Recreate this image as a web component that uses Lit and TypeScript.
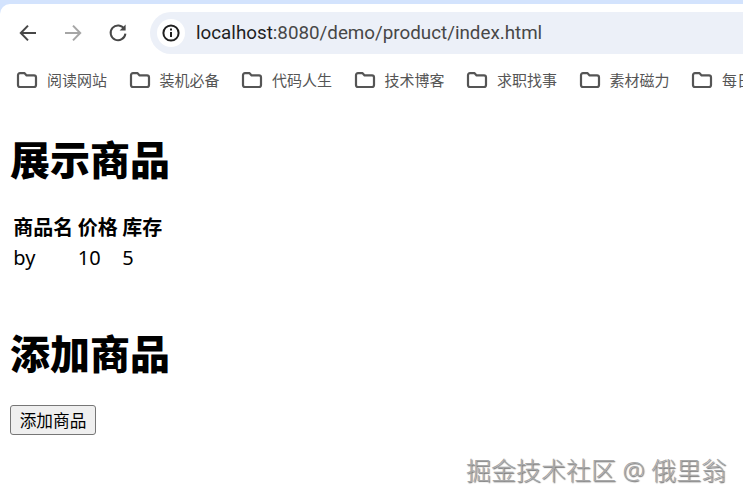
import { LitElement, html, css, svg } from "lit";
import { customElement } from "lit/decorators.js";

const folder = svg`<svg class="folder" viewBox="0 0 22 18" width="22" height="18" fill="none"><path d="M2 4.2C2 3 2.8 2.2 4 2.2h4.6l2 2.2H18c1.2 0 2 .8 2 2v7.6c0 1.2-.8 2-2 2H4c-1.2 0-2-.8-2-2z" stroke="#555" stroke-width="2.2" stroke-linejoin="round"/></svg>`;

const marks = ["阅读网站", "装机必备", "代码人生", "技术博客", "求职找事", "素材磁力", "每日"];

@customElement("app-root")
export class AppRoot extends LitElement {
  static styles = css`
    :host { display: block; position: relative; width: 743px; height: 502px; overflow: hidden; background: #fff; font-family: "Noto Sans", "Noto Sans CJK SC", sans-serif; color: #000; }
    .frame { background: #d3e3fd; padding-top: 4px; }
    .toolbar { height: 58px; display: flex; align-items: center; padding-left: 17px; box-sizing: border-box; background: #fff; border-top-left-radius: 10px; }
    .nav { width: 22px; height: 22px; display: block; }
    .nav + .nav { margin-left: 23px; }
    .omni { margin-left: 21px; flex: 1; height: 42px; background: #ecf0f8; border-radius: 21px 0 0 21px; display: flex; align-items: center; padding-left: 7px; }
    .info { width: 28px; height: 28px; border-radius: 50%; background: #fff; display: flex; align-items: center; justify-content: center; }
    .url { margin-left: 11px; font: 18.8px "Roboto", "Noto Sans", sans-serif; color: #1f1f1f; white-space: nowrap; }
    .url span { color: #474747; }
    .marks { height: 35px; display: flex; align-items: center; padding-left: 16px; gap: 21.5px; white-space: nowrap; }
    .mark { display: flex; align-items: center; gap: 9px; font-size: 15px; color: #555; }
    .folder { display: block; flex: none; }
    main { padding: 0 10px; }
    h1 { margin: 0; font-size: 40px; line-height: 58px; font-weight: 900; }
    .h-a { margin-top: 34px; }
    .h-b { margin-top: 52px; }
    table { border-collapse: separate; border-spacing: 2.5px; margin-top: 23px; font-size: 20px; line-height: 25px; }
    th, td { padding: 1.25px; text-align: left; font-weight: 400; }
    th { font-weight: 700; }
    button { margin-top: 22px; display: block; height: 30px; width: 86px; padding: 0; font: 16.67px "Noto Sans CJK SC", sans-serif; color: #000; background: #efefef; border: 1.25px solid #767676; border-radius: 3px; }
    .water { position: absolute; left: 466px; top: 454px; font-size: 25px; line-height: 32px; font-weight: 300; white-space: nowrap; color: #a8a8a8; text-shadow: 1px 1px 1px #777; }
  `;

  render() {
    return html`
      <div class="frame">
        <div class="toolbar">
          <svg class="nav" viewBox="0 0 22 22" fill="none" stroke="#474747" stroke-width="2"><path d="M19 11H4M11 3.6 3.8 11l7.2 7.4"/></svg>
          <svg class="nav" viewBox="0 0 22 22" fill="none" stroke="#a6a6a6" stroke-width="2"><path d="M3 11h15M11 3.6 18.2 11 11 18.4"/></svg>
          <svg class="nav" viewBox="0 0 22 22" fill="none" stroke="#474747" stroke-width="2"><path d="M17.4 7A7.4 7.4 0 1 0 18.4 11.6"/><path d="M18.6 2.6v6h-6" fill="#474747" stroke="none"/></svg>
          <div class="omni">
            <div class="info">
              <svg viewBox="0 0 20 20" width="20" height="20" fill="none"><circle cx="10" cy="10" r="7.6" stroke="#1f1f1f" stroke-width="2"/><path d="M10 9v5M10 5.6v1.8" stroke="#1f1f1f" stroke-width="2"/></svg>
            </div>
            <div class="url">localhost<span>:8080/demo/product/index.html</span></div>
          </div>
        </div>
      </div>
      <div class="marks">
        ${marks.map((m) => html`<div class="mark">${folder}<span>${m}</span></div>`)}
      </div>
      <main>
        <h1 class="h-a">展示商品</h1>
        <table>
          <tr><th>商品名</th><th>价格</th><th>库存</th></tr>
          <tr><td>by</td><td>10</td><td>5</td></tr>
        </table>
        <h1 class="h-b">添加商品</h1>
        <button>添加商品</button>
      </main>
      <div class="water">掘金技术社区 @ 俄里翁</div>
    `;
  }
}
